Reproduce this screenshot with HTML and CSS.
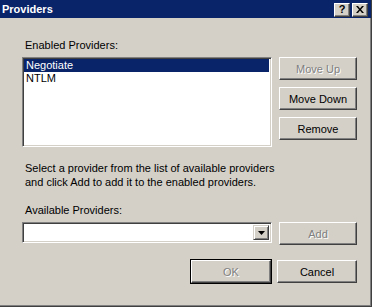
FILE: index.html
```html
<!DOCTYPE html>
<html lang="en">
<head>
    <meta charset="UTF-8">
    <title>Providers</title>
    <link rel="stylesheet" href="styles.css">
</head>
<body>
    <div class="window">
        <div class="titlebar">
            <span class="title">Providers</span>
            <div class="title-buttons">
                <span class="tbtn">?</span>
                <span class="tbtn tbtn-close">
                    <svg width="8" height="7" viewBox="0 0 8 7"><path d="M0 0h2l2 2.5L6 0h2L5 3.5 8 7H6L4 4.5 2 7H0l3-3.5z" fill="#000"/></svg>
                </span>
            </div>
        </div>

        <div class="content">
            <div class="label">Enabled Providers:</div>
            <div class="row">
                <div class="listbox">
                    <div class="item selected">Negotiate</div>
                    <div class="item">NTLM</div>
                </div>
                <div class="side-buttons">
                    <button class="btn" disabled>Move Up</button>
                    <button class="btn">Move Down</button>
                    <button class="btn">Remove</button>
                </div>
            </div>

            <p class="help">Select a provider from the list of available providers<br>and click Add to add it to the enabled providers.</p>

            <div class="label">Available Providers:</div>
            <div class="row">
                <div class="combo">
                    <span class="combo-arrow">
                        <svg width="7" height="4" viewBox="0 0 7 4"><path d="M0 0h7L3.5 4z" fill="#000"/></svg>
                    </span>
                </div>
                <button class="btn btn-add" disabled>Add</button>
            </div>

            <div class="footer">
                <button class="btn btn-default" disabled>OK</button>
                <button class="btn">Cancel</button>
            </div>
        </div>
    </div>
</body>
</html>
```

FILE: styles.css
```css
body {
    margin: 0;
    font-family: "Liberation Sans", Arial, sans-serif;
    font-size: 11px;
    color: #000;
    background: #d4d0c8;
}

.window {
    width: 372px;
    height: 307px;
    background: #d4d0c8;
    box-sizing: border-box;
    box-shadow: inset -1px -1px #404040, inset -2px -2px #808080;
}

.titlebar {
    height: 18px;
    background: #0a246a;
    display: flex;
    align-items: center;
    justify-content: space-between;
    padding: 0 3px 0 2px;
    margin-right: 1px;
}

.title {
    color: #fff;
    font-weight: bold;
    font-size: 11px;
}

.title-buttons {
    display: flex;
    gap: 2px;
    margin-top: 1px;
}

.tbtn {
    width: 16px;
    height: 14px;
    box-sizing: border-box;
    background: #d4d0c8;
    border: 1px solid;
    border-color: #fff #404040 #404040 #fff;
    box-shadow: inset -1px -1px #808080;
    display: flex;
    align-items: center;
    justify-content: center;
    font-weight: bold;
    font-size: 11px;
    line-height: 1;
}

.content {
    padding: 21px 15px 0 22px;
}

.label {
    line-height: 13px;
    padding-left: 3px;
    margin-bottom: 5px;
}

.row {
    display: flex;
    gap: 7px;
    align-items: flex-start;
}

.listbox {
    width: 250px;
    height: 90px;
    box-sizing: border-box;
    background: #fff;
    border: 1px solid;
    border-color: #808080 #fff #fff #808080;
    box-shadow: inset 1px 1px #404040, inset -1px -1px #d4d0c8;
    padding: 1px 2px 2px 1px;
}

.item {
    height: 13px;
    line-height: 13px;
    padding-left: 2px;
}

.item.selected {
    background: #0a246a;
    color: #fff;
}

.side-buttons {
    display: flex;
    flex-direction: column;
    gap: 7px;
}

.btn {
    width: 78px;
    height: 23px;
    box-sizing: border-box;
    background: #d4d0c8;
    border: 1px solid;
    border-color: #fff #404040 #404040 #fff;
    box-shadow: inset -1px -1px #808080;
    font-family: inherit;
    font-size: 11px;
    color: #000;
    padding: 0;
}

.btn:disabled {
    color: #808080;
    text-shadow: 1px 1px #fff;
}

.help {
    margin: 14px 0 15px;
    line-height: 14px;
    padding-left: 3px;
}

.combo {
    width: 250px;
    height: 21px;
    box-sizing: border-box;
    background: #fff;
    border: 1px solid;
    border-color: #808080 #fff #fff #808080;
    box-shadow: inset 1px 1px #404040, inset -1px -1px #d4d0c8;
    display: flex;
    justify-content: flex-end;
    padding: 2px 2px 2px 0;
}

.combo-arrow {
    width: 16px;
    height: 15px;
    box-sizing: border-box;
    background: #d4d0c8;
    border: 1px solid;
    border-color: #d4d0c8 #404040 #404040 #d4d0c8;
    box-shadow: inset 1px 1px #fff, inset -1px -1px #808080;
    display: flex;
    align-items: center;
    justify-content: center;
}

.footer {
    display: flex;
    justify-content: flex-end;
    gap: 6px;
    margin-top: 15px;
}

.footer .btn {
    width: 80px;
}

.btn-default {
    border-color: #fff #404040 #404040 #fff;
    outline: 1px solid #000;
    box-shadow: inset -1px -1px #808080;
}
```
